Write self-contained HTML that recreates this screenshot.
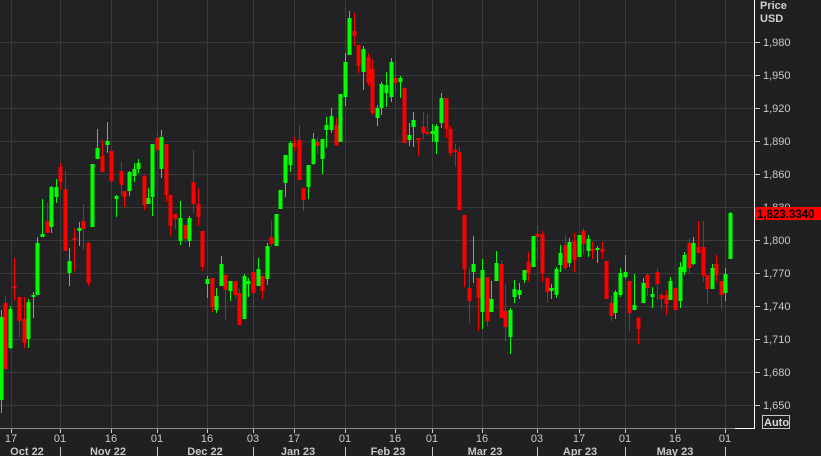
<!DOCTYPE html>
<html><head><meta charset="utf-8"><style>
html,body{margin:0;padding:0;background:#222224;width:821px;height:456px;overflow:hidden;font-family:"Liberation Sans",sans-serif}
svg{position:absolute;left:0;top:0}
</style></head><body>
<svg id="s" width="821" height="456" xmlns="http://www.w3.org/2000/svg">
<rect x="0" y="0" width="754" height="428" fill="#222224"/>
<rect x="754" y="0" width="67" height="456" fill="#202021"/>
<rect x="0" y="428" width="754" height="28" fill="#202021"/>
<g id="grid" stroke="#3a3a3b" stroke-width="1"></g>
<g id="c"></g>
<line x1="754.5" y1="0" x2="754.5" y2="428" stroke="#ffffff"/>
<line x1="0" y1="428.5" x2="735" y2="428.5" stroke="#8a8a8a"/>
<line x1="735" y1="428.5" x2="755" y2="428.5" stroke="#ffffff"/>
<g id="ax" font-size="11" fill="#c8c8c8"></g>
<text x="760" y="9" font-size="11" font-weight="bold" fill="#d0d0d0">Price</text>
<text x="760" y="22" font-size="11" font-weight="bold" fill="#d0d0d0">USD</text>
<rect x="755" y="207" width="66" height="13" fill="#ff0000"/>
<text x="757" y="218" font-size="11.5" font-weight="bold" fill="#000">1,823.3340</text>
<rect x="762.5" y="415.5" width="27" height="13" fill="none" stroke="#c8c8c8"/>
<text x="764" y="426" font-size="11" font-weight="bold" fill="#d8d8d8">Auto</text>
</svg>
<script>
var NS="http://www.w3.org/2000/svg";
function el(p,t,a,txt){var e=document.createElementNS(NS,t);for(var k in a)e.setAttribute(k,a[k]);if(txt)e.textContent=txt;p.appendChild(e);return e;}
var g=document.getElementById("grid"),ax=document.getElementById("ax"),s=document.getElementById("s");
var vx=[11,60,111,157,207,253,294,345,395,432,482,537,579,625,675,725];
vx.forEach(function(x){el(g,"line",{x1:x+.5,y1:0,x2:x+.5,y2:428});});
var prices=[1980,1950,1920,1890,1860,1830,1800,1770,1740,1710,1680,1650];
prices.forEach(function(p){var y=Math.round(42+(1980-p)*1.1);el(g,"line",{x1:0,y1:y+.5,x2:754,y2:y+.5});
el(ax,"line",{x1:755,y1:y+.5,x2:760,y2:y+.5,stroke:"#c8c8c8"});
el(ax,"text",{x:763,y:y+4},p.toString().replace(/(\d)(\d{3})$/,"$1,$2"));});
var days=["17","01","16","01","16","03","17","01","16","01","16","03","17","01","16","01"];
vx.forEach(function(x,i){el(ax,"line",{x1:x+.5,y1:429,x2:x+.5,y2:433,stroke:"#c8c8c8"});
el(ax,"text",{x:x,y:442,"text-anchor":"middle"},days[i]);});
[60,157,253,345,432,537,625,725].forEach(function(x){el(ax,"line",{x1:x+.5,y1:447,x2:x+.5,y2:456,stroke:"#c8c8c8"});});
[["Oct 22",27],["Nov 22",108],["Dec 22",205],["Jan 23",298],["Feb 23",388],["Mar 23",485],["Apr 23",580],["May 23",675]].forEach(function(m){
el(ax,"text",{x:m[1],y:455,"text-anchor":"middle","font-weight":"bold"},m[0]);});
var G="g",R="r";
var d=[
[1,317,400,310,413,G],[5,303,369,296,370,R],[10,309,348,306,349,G],[14,286,288,258,300,R],[19,297,321,297,337,R],[24,319,343,297,348,R],[28,302,339,299,348,G],[33,295,297,292,318,G],[37,243,295,237,295,G],[42,234,237,199,237,G],[47,221,233,203,233,R],[51,187,227,186,233,G],[56,187,197,179,203,G],[60,167,182,163,190,R],[65,189,251,171,251,R],[69,261,273,248,286,G],[74,238,239,228,271,R],[79,228,231,222,246,G],[83,221,229,204,250,R],[88,243,283,242,286,R],[92,164,227,164,227,G],[97,148,159,129,159,G],[102,156,172,140,172,R],[107,141,145,122,153,G],[111,151,181,151,183,R],[116,196,199,195,217,G],[121,171,185,162,195,R],[124,191,197,191,207,R],[129,172,191,171,196,G],[134,169,176,163,182,G],[138,163,169,159,173,G],[144,176,205,175,210,R],[148,198,204,188,204,G],[152,144,197,144,216,G],[157,138,150,131,154,R],[161,137,169,130,178,G],
[166,144,195,144,202,R],[170,195,226,195,236,R],[175,214,219,214,229,R],[180,218,241,201,245,G],[185,225,239,225,242,R],[189,218,241,216,247,G],[193,182,204,150,213,R],[198,204,217,188,226,R],[202,231,267,231,271,R],[207,279,284,276,298,G],[212,278,307,278,312,R],[216,296,310,288,313,G],[221,264,286,256,286,G],[225,275,290,275,320,R],[230,281,291,281,301,G],[235,281,295,281,299,R],[239,293,325,289,325,R],[244,276,319,274,319,G],[248,281,284,278,297,G],[253,272,293,254,307,R],[258,269,286,258,286,G],[262,276,291,276,299,R],[267,246,279,243,285,G],[271,237,244,220,246,R],[276,214,246,214,246,G],[280,190,209,190,209,G],[285,155,183,155,197,G],[290,143,165,141,172,G],[294,143,147,137,151,R],[299,140,180,125,180,R],[303,188,200,188,211,R],[308,165,187,165,199,G],[313,139,164,133,165,G],[317,142,146,137,154,R],[322,139,159,139,174,G],[326,125,130,117,148,G],[331,116,130,108,133,G],[336,125,145,118,146,R],[340,94,142,94,142,G],[345,62,97,53,106,G],[349,18,55,11,55,G],[354,31,36,13,46,R],[358,45,66,45,73,R],[363,49,72,46,90,G],[368,57,83,53,86,R],[372,69,113,59,115,R],
[377,108,118,105,126,G],[381,84,108,82,115,G],[386,85,93,72,107,G],[391,62,97,58,102,G],[395,78,83,60,93,R],[400,78,82,76,98,G],[404,88,143,88,143,R],[409,135,140,123,146,G],[413,120,127,112,147,G],[418,138,139,138,156,R],[423,127,133,112,139,R],[427,132,133,114,133,R],[432,131,134,124,142,G],[436,126,142,124,154,G],[441,98,123,93,128,G],[446,98,129,98,138,R],[450,129,153,126,156,R],[455,150,151,144,167,R],[459,152,210,147,210,R],[464,215,269,215,287,R],[469,288,301,268,323,R],[473,264,272,236,283,G],[478,278,298,278,331,R],[482,270,312,259,329,G],[487,277,321,277,326,R],[491,299,312,281,312,G],[496,263,281,251,281,G],[501,264,318,261,318,R],[505,311,327,284,342,R],[510,310,337,308,354,G],[514,289,297,280,303,G],[519,290,295,283,299,G],[524,270,280,270,283,G],[528,262,273,252,281,R],[533,236,267,236,267,G],[537,234,237,225,259,R],[542,234,273,231,282,R],[547,278,292,278,302,R],[551,288,291,284,299,G],[556,269,295,267,298,G],
[560,253,265,245,272,G],[565,245,268,235,270,R],[569,242,263,238,267,G],[574,241,260,233,272,R],[579,235,257,235,257,G],[583,231,244,228,254,R],[588,239,251,235,257,G],[592,249,251,242,259,R],[597,248,250,246,263,G],[602,249,252,242,259,R],[606,261,299,261,299,R],[611,303,316,296,321,R],[615,292,313,290,319,G],[620,273,295,268,297,G],[625,272,277,255,279,G],[629,281,313,281,331,R],[634,305,310,274,310,G],[638,318,329,317,344,R],[643,283,303,278,303,G],[647,275,288,273,296,R],[652,294,297,287,308,G],[657,272,284,268,300,R],[661,295,299,293,309,R],[666,295,304,290,315,R],[670,281,300,277,300,G],[675,288,310,288,310,R],[680,267,301,262,308,G],[684,255,272,252,275,G],[689,243,268,238,274,R],[693,243,264,237,265,G],[698,247,253,221,253,R],[703,247,276,221,282,R],[707,275,289,275,304,R],[712,268,289,264,289,G],[716,264,275,255,282,R],[721,281,295,281,309,R],[725,274,293,268,301,G],[730,213,259,212,259,G]];
var c=document.getElementById("c");
d.forEach(function(k){var col=k[5]==G?"#00ff00":"#ff0000";
el(c,"rect",{x:k[0],y:k[3],width:1,height:Math.max(1,k[4]-k[3]),fill:col});
el(c,"rect",{x:k[0]-1.5,y:k[1],width:4,height:Math.max(2,k[2]-k[1]),fill:col});});
</script>
</body></html>
